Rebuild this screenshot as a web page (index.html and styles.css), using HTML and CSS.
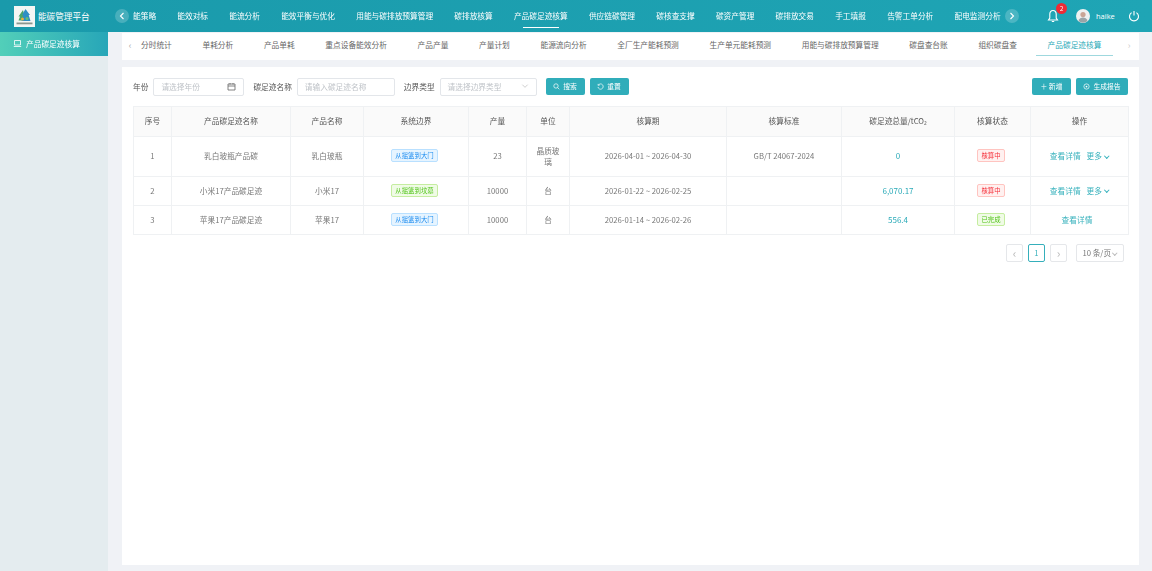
FILE: index.html
```html
<!DOCTYPE html>
<html lang="zh-CN">
<head>
    <meta charset="UTF-8">
    <meta name="viewport" content="width=device-width, initial-scale=1.0">
    <title>能碳管理平台</title>
    <link rel="stylesheet" href="styles.css">
</head>
<body>
    <header class="topbar">
        <div class="brand">
            <div class="logo">
                <svg viewBox="0 0 21 21" width="21" height="21">
                    <path d="M9 4 4.500 10.500H6l-1.500 4H10V8z" fill="#4aa66a"/>
                    <path d="M11.500 3 8 9h1.300L7.500 15h9l-1.800-6H16z" fill="#2f8fc4"/>
                    <circle cx="8.500" cy="13" r="1.500" fill="#e8b13a"/>
                    <circle cx="13" cy="12.500" r="1.500" fill="#5fc07a"/>
                    <rect x="2.500" y="16.500" width="16" height="1.800" fill="#8b968e"/>
                </svg>
            </div>
            <span class="brand-name">能碳管理平台</span>
        </div>
        <button class="nav-arrow">
            <svg viewBox="0 0 8 8" width="8" height="8"><path d="M5.500 1 2.500 4l3 3" fill="none" stroke="#fff" stroke-width="1.100"/></svg>
        </button>
        <nav class="topnav">
            <a>能策略</a>
            <a>能效对标</a>
            <a>能流分析</a>
            <a>能效平衡与优化</a>
            <a>用能与碳排放预算管理</a>
            <a>碳排放核算</a>
            <a class="active">产品碳足迹核算</a>
            <a>供应链碳管理</a>
            <a>碳核查支撑</a>
            <a>碳资产管理</a>
            <a>碳排放交易</a>
            <a>手工填报</a>
            <a>告警工单分析</a>
            <a>配电监测分析</a>
        </nav>
        <button class="nav-arrow">
            <svg viewBox="0 0 8 8" width="8" height="8"><path d="M2.500 1l3 3-3 3" fill="none" stroke="#fff" stroke-width="1.100"/></svg>
        </button>
        <div class="user-area">
            <span class="bell">
                <svg viewBox="0 0 14 14" width="14" height="14"><path d="M7 1.500C4.800 1.500 3.800 3.200 3.800 5v4L2.500 11h9l-1.300-2V5c0-1.800-1-3.500-3.200-3.500zM5.800 12.500h2.400" fill="none" stroke="#fff" stroke-width="1.100"/></svg>
                <i class="badge">2</i>
            </span>
            <span class="avatar">
                <svg viewBox="0 0 14 14" width="14" height="14"><circle cx="7" cy="7" r="7" fill="#eef1f1"/><circle cx="7" cy="5.600" r="2.600" fill="#c9a596"/><path d="M2.500 12c.8-2.600 2.500-3.500 4.500-3.500s3.700.9 4.500 3.500a7 7 0 0 1-9 0z" fill="#9aa5a8"/></svg>
            </span>
            <span class="username">haike</span>
            <svg class="power" viewBox="0 0 12 12" width="12" height="12"><path d="M3.600 2.600a4.500 4.500 0 1 0 4.800 0M6 1v4.500" fill="none" stroke="#fff" stroke-width="1.100"/></svg>
        </div>
    </header>

    <div class="layout">
        <aside class="sidebar">
            <div class="side-item">
                <svg viewBox="0 0 9 9" width="9" height="9"><path d="M1.500 1.500h6v4.500h-6zM.8 7.500h7.400" fill="none" stroke="#fff" stroke-width=".8"/></svg>
                <span>产品碳足迹核算</span>
            </div>
        </aside>

        <main class="main">
            <div class="tabs">
                <span class="tab-arrow">‹</span>
                <div class="tab-list">
                    <a>分时统计</a>
                    <a>单耗分析</a>
                    <a>产品单耗</a>
                    <a>重点设备能效分析</a>
                    <a>产品产量</a>
                    <a>产量计划</a>
                    <a>能源流向分析</a>
                    <a>全厂生产能耗预测</a>
                    <a>生产单元能耗预测</a>
                    <a>用能与碳排放预算管理</a>
                    <a>碳盘查台账</a>
                    <a>组织碳盘查</a>
                    <a class="active">产品碳足迹核算</a>
                </div>
                <span class="tab-arrow right">›</span>
            </div>

            <section class="card">
                <div class="filters">
                    <label>年份</label>
                    <div class="field year">
                        <span>请选择年份</span>
                        <svg viewBox="0 0 9 9" width="9" height="9"><path d="M1 2h7v6H1zM1 4h7M3 1v1.500M6 1v1.500" fill="none" stroke="#666" stroke-width=".8"/></svg>
                    </div>
                    <label>碳足迹名称</label>
                    <div class="field name"><span>请输入碳足迹名称</span></div>
                    <label>边界类型</label>
                    <div class="field type">
                        <span>请选择边界类型</span>
                        <svg viewBox="0 0 9 9" width="8" height="8"><path d="M1.500 3 4.500 6l3-3" fill="none" stroke="#bbb" stroke-width=".8"/></svg>
                    </div>
                    <button class="btn search">
                        <svg viewBox="0 0 8 8" width="7" height="7"><path d="M3.400.9a2.500 2.500 0 1 0 0 5 2.500 2.500 0 0 0 0-5zM5.200 5.200 7.200 7.200" fill="none" stroke="#fff" stroke-width=".8"/></svg>
                        搜索
                    </button>
                    <button class="btn">
                        <svg viewBox="0 0 8 8" width="7" height="7"><path d="M1.500 2.500a3 3 0 1 1-.4 2M1.300 1v1.600h1.600" fill="none" stroke="#fff" stroke-width=".8"/></svg>
                        重置
                    </button>
                    <div class="filter-actions">
                        <button class="btn">＋ 新增</button>
                        <button class="btn report">
                            <svg viewBox="0 0 8 8" width="7" height="7"><circle cx="4" cy="4" r="3" fill="none" stroke="#fff" stroke-width=".8"/><circle cx="4" cy="4" r="1" fill="#fff"/></svg>
                            生成报告
                        </button>
                    </div>
                </div>

                <table class="data">
                    <colgroup>
                        <col class="c-no"><col class="c-fp"><col class="c-prod"><col class="c-bound"><col class="c-qty"><col class="c-unit"><col class="c-period"><col class="c-std"><col class="c-total"><col class="c-status"><col class="c-ops">
                    </colgroup>
                    <thead>
                        <tr>
                            <th>序号</th><th>产品碳足迹名称</th><th>产品名称</th><th>系统边界</th><th>产量</th><th>单位</th><th>核算期</th><th>核算标准</th><th>碳足迹总量/tCO₂</th><th>核算状态</th><th>操作</th>
                        </tr>
                    </thead>
                    <tbody>
                        <tr class="tall">
                            <td>1</td><td>乳白玻瓶产品碳</td><td>乳白玻瓶</td>
                            <td><span class="tag blue">从摇篮到大门</span></td>
                            <td>23</td><td>晶质玻璃</td><td>2026-04-01 ~ 2026-04-30</td><td>GB/T 24067-2024</td>
                            <td class="total">0</td>
                            <td><span class="tag red">核算中</span></td>
                            <td class="ops"><a>查看详情</a><a>更多 <i class="chev"></i></a></td>
                        </tr>
                        <tr>
                            <td>2</td><td>小米17产品碳足迹</td><td>小米17</td>
                            <td><span class="tag green">从摇篮到坟墓</span></td>
                            <td>10000</td><td>台</td><td>2026-01-22 ~ 2026-02-25</td><td></td>
                            <td class="total">6,070.17</td>
                            <td><span class="tag red">核算中</span></td>
                            <td class="ops"><a>查看详情</a><a>更多 <i class="chev"></i></a></td>
                        </tr>
                        <tr>
                            <td>3</td><td>苹果17产品碳足迹</td><td>苹果17</td>
                            <td><span class="tag blue">从摇篮到大门</span></td>
                            <td>10000</td><td>台</td><td>2026-01-14 ~ 2026-02-26</td><td></td>
                            <td class="total">556.4</td>
                            <td><span class="tag green">已完成</span></td>
                            <td class="ops"><a>查看详情</a></td>
                        </tr>
                    </tbody>
                </table>

                <div class="pager">
                    <span class="page-btn arrow">‹</span>
                    <span class="page-btn current">1</span>
                    <span class="page-btn arrow">›</span>
                    <span class="page-size">10 条/页<i class="chev grey"></i></span>
                </div>
            </section>
        </main>
    </div>
</body>
</html>
```

FILE: styles.css
```css
* {
    box-sizing: border-box;
}

html, body {
    height: 100%;
}

body {
    margin: 0;
    display: flex;
    flex-direction: column;
    background: #f0f2f6;
    color: #666;
    font-family: "Noto Sans CJK SC", "Open Sans", sans-serif;
    font-size: 7.7px;
    overflow: hidden;
    filter: blur(0.5px);
}

button {
    font: inherit;
    border: 0;
}

/* top bar */
.topbar {
    height: 32px;
    flex: none;
    display: flex;
    align-items: center;
    background: linear-gradient(90deg, #1a9aab, #1fa5b5);
    color: #fff;
}

.brand {
    width: 115px;
    flex: none;
    display: flex;
    align-items: center;
    gap: 3px;
    padding-left: 14px;
}

.logo {
    width: 21px;
    height: 21px;
    background: #f4f6f4;
    flex: none;
}

.brand-name {
    font-size: 8.6px;
    white-space: nowrap;
    padding-bottom: 1px;
}

.nav-arrow {
    width: 14px;
    height: 14px;
    flex: none;
    display: flex;
    align-items: center;
    justify-content: center;
    padding: 0;
    border-radius: 50%;
    background: rgba(255, 255, 255, 0.2);
}

.topnav {
    width: 876px;
    flex: none;
    display: flex;
    gap: 21.2px;
    padding-left: 4px;
    overflow: hidden;
    white-space: nowrap;
}

.topnav a {
    height: 32px;
    line-height: 31px;
    flex: none;
    position: relative;
}

.topnav a.active::after {
    content: "";
    position: absolute;
    left: 9px;
    right: 9px;
    bottom: 4px;
    height: 1px;
    background: #fff;
}

.user-area {
    flex: 1;
    display: flex;
    align-items: center;
    padding-left: 27px;
}

.bell {
    width: 14px;
    height: 14px;
    position: relative;
    flex: none;
}

.bell svg {
    display: block;
}

.badge {
    position: absolute;
    top: -6px;
    left: 10px;
    width: 11px;
    height: 11px;
    line-height: 11px;
    border-radius: 50%;
    background: #ef2b36;
    color: #fff;
    font-size: 6.5px;
    font-style: normal;
    text-align: center;
}

.avatar {
    margin-left: 16px;
    height: 14px;
    flex: none;
}

.avatar svg {
    display: block;
}

.username {
    margin-left: 6px;
    font-family: "Open Sans", sans-serif;
    font-size: 7.5px;
}

.power {
    margin-left: 13px;
    flex: none;
}

/* page body */
.layout {
    flex: 1;
    min-height: 0;
    display: flex;
}

.sidebar {
    width: 108px;
    flex: none;
    background: #e4ecef;
}

.side-item {
    height: 24px;
    display: flex;
    align-items: center;
    gap: 4px;
    padding: 0 0 1px 13px;
    background: linear-gradient(90deg, #52cfb9, #27a6b8);
    color: #fff;
}

.main {
    flex: 1;
    min-width: 0;
    display: flex;
    flex-direction: column;
    gap: 7px;
    padding: 1px 13px 6px 14px;
}

.tabs {
    height: 27px;
    flex: none;
    display: flex;
    align-items: center;
    background: #fff;
    position: relative;
}

.tab-arrow {
    width: 16px;
    flex: none;
    text-align: center;
    color: #aaa;
    font-size: 9px;
    padding-bottom: 3px;
}

.tab-arrow.right {
    width: 20px;
    margin-left: auto;
    color: #ccc;
}

.tab-list {
    flex: 1;
    min-width: 0;
    display: flex;
    gap: 30.7px;
    padding-left: 3px;
    white-space: nowrap;
    overflow: hidden;
}

.tab-list a {
    height: 27px;
    line-height: 24px;
    flex: none;
    position: relative;
}

.tab-list a.active {
    color: #2aaab8;
}

.tab-list a.active::after {
    content: "";
    position: absolute;
    left: -12px;
    right: -12px;
    bottom: 4px;
    height: 1px;
    background: #9fd8de;
}

.card {
    flex: 1;
    min-height: 0;
    background: #fff;
    padding: 10px 11px;
}

/* filter row */
.filters {
    height: 19px;
    display: flex;
    align-items: center;
    color: #555;
}

.filters label {
    white-space: nowrap;
    padding-bottom: 1px;
}

.field {
    height: 18px;
    margin: 0 9px 0 5px;
    padding: 0 7px 1px;
    flex: none;
    display: flex;
    align-items: center;
    justify-content: space-between;
    border: 1px solid #e3e6ea;
    border-radius: 2px;
    color: #bfc3c8;
}

.field.year { width: 91px; }
.field.name { width: 98px; }
.field.type { width: 97px; }

.btn {
    width: 39px;
    height: 17px;
    padding: 0 0 1px;
    display: inline-flex;
    align-items: center;
    justify-content: center;
    gap: 3px;
    border-radius: 2px;
    background: #30adba;
    color: #fff;
    font-size: 6.8px;
    white-space: nowrap;
}

.btn.report {
    width: 52px;
}

.btn.search {
    margin-right: 5px;
}

.filter-actions {
    margin-left: auto;
    display: flex;
    gap: 5px;
}

/* table */
.data {
    width: 995px;
    margin-top: 10px;
    table-layout: fixed;
    border-collapse: collapse;
    text-align: center;
}

.c-no { width: 38px; }
.c-fp { width: 119px; }
.c-prod { width: 73px; }
.c-bound { width: 105px; }
.c-qty { width: 58px; }
.c-unit { width: 43px; }
.c-period { width: 157px; }
.c-std { width: 115px; }
.c-total { width: 113px; }
.c-status { width: 76px; }
.c-ops { width: 98px; }

.data th,
.data td {
    height: 29px;
    padding: 0 8px 2px;
    border: 1px solid #eff1f3;
    font-weight: 400;
}

.data th {
    height: 30px;
    background: #fafafa;
    color: #555;
}

.data tr.tall td {
    height: 40px;
}

.data td {
    color: #777;
}

.data td.total {
    color: #2aaab8;
    font-size: 8px;
}

.tag {
    display: inline-block;
    margin-right: 3px;
    padding: 0 3px;
    line-height: 11px;
    border: 1px solid;
    border-radius: 2px;
    font-size: 6.4px;
    white-space: nowrap;
}

.tag.blue {
    background: #e6f4ff;
    border-color: #b9e0ff;
    color: #1c8cf0;
}

.tag.green {
    background: #f0fbe6;
    border-color: #c5eda0;
    color: #52c41a;
}

.tag.red {
    background: #fff1f0;
    border-color: #ffc4c0;
    color: #f5303a;
}

.data td.ops {
    padding: 0 0 2px;
}

.ops a {
    color: #38b2bd;
    margin: 0 3px;
}

.ops a:only-child {
    margin-right: 8px;
}

.chev {
    display: inline-block;
    width: 3.5px;
    height: 3.5px;
    margin: 0 1px 2px;
    border-right: 1px solid currentColor;
    border-bottom: 1px solid currentColor;
    transform: rotate(45deg);
}

.chev.grey {
    color: #bbb;
    margin-left: 2px;
}

/* pagination */
.pager {
    display: flex;
    align-items: center;
    gap: 5px;
    width: 991px;
    justify-content: flex-end;
    margin-top: 9px;
}

.page-btn {
    width: 17px;
    height: 18px;
    line-height: 15px;
    text-align: center;
    border: 1px solid #e5e7ea;
    border-radius: 2px;
    color: #bbb;
}

.page-btn.arrow {
    font-size: 12px;
}

.page-btn.current {
    border-color: #35afbb;
    color: #35afbb;
}

.page-size {
    width: 48px;
    height: 18px;
    margin-left: 4px;
    line-height: 15px;
    text-align: center;
    border: 1px solid #e5e7ea;
    border-radius: 2px;
    color: #777;
}
```
